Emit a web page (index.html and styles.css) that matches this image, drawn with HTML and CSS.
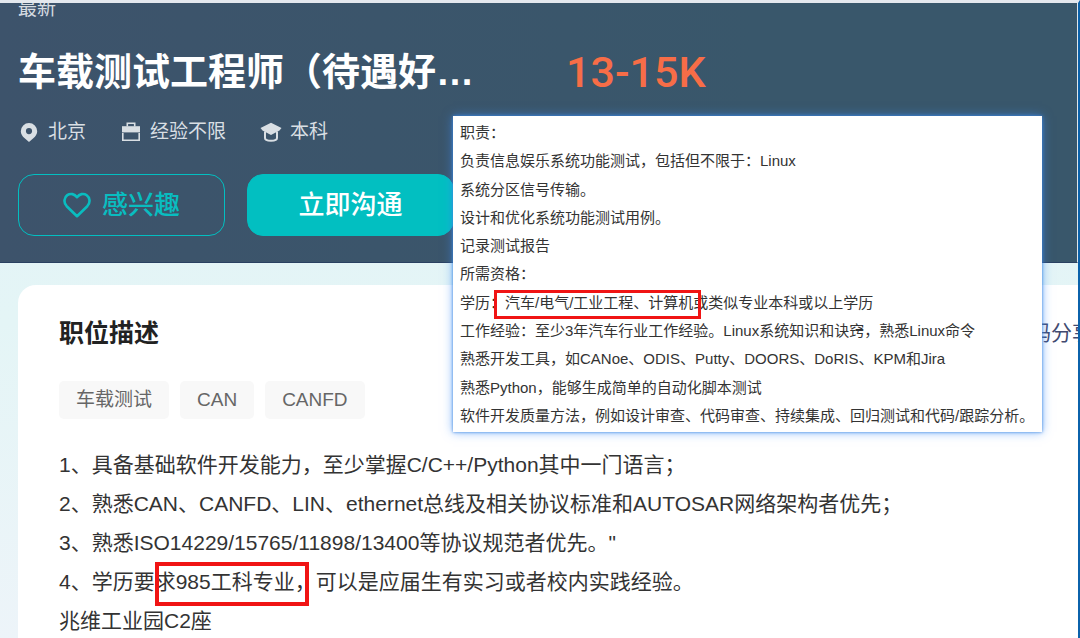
FILE: index.html
```html
<!DOCTYPE html>
<html lang="zh-CN">
<head>
<meta charset="utf-8">
<meta name="viewport" content="width=device-width, initial-scale=1">
<title>车载测试工程师</title>
<link rel="stylesheet" href="styles.css">
</head>
<body>
<div class="page">
  <header class="hero">
    <div class="hero-label">最新</div>
    <div class="hero-head">
      <h1 class="job-title">车载测试工程师（待遇好…</h1>
      <span class="salary">13-15K</span>
    </div>
    <ul class="meta">
      <li class="meta-item">
        <svg class="meta-icon" viewBox="0 0 20 20" aria-hidden="true"><path fill="currentColor" fill-rule="evenodd" d="M11 1a8.2 8.2 0 0 0-8.2 8.2c0 3 1.7 5 3.600 6.800L11 20l4.600-4c1.900-1.800 3.600-3.800 3.600-6.800A8.200 8.200 0 0 0 11 1zm0 5a3.100 3.100 0 1 1 0 6.200A3.100 3.100 0 0 1 11 6z"/></svg>
        <span>北京</span>
      </li>
      <li class="meta-item">
        <svg class="meta-icon" viewBox="0 0 20 20" aria-hidden="true"><path fill="none" stroke="currentColor" stroke-width="1.600" d="M7.300 4.500V1.300h7.400v3.200M2.800 11v7.200h16.400V11"/><path fill="currentColor" d="M2 4.200h18v6.200H2z"/></svg>
        <span>经验不限</span>
      </li>
      <li class="meta-item">
        <svg class="meta-icon" viewBox="0 0 20 20" aria-hidden="true"><path fill="currentColor" d="M11 .8 21.500 6 19.500 8.400 11 13 2.500 8.400.5 6z"/><path fill="none" stroke="currentColor" stroke-width="2" d="M5 9.500v6.500c0 3.700 12 3.700 12 0V9.500"/></svg>
        <span>本科</span>
      </li>
    </ul>
    <div class="actions">
      <button class="btn btn-outline" type="button">
        <svg class="heart" viewBox="0 0 28 26" aria-hidden="true"><path fill="none" stroke="currentColor" stroke-width="2.600" stroke-linejoin="round" d="M14 24.200 3.700 14.200C.2 10.500 1.200 5.300 4.300 3.200c3.100-2.200 7.300-1.300 9.700 2 2.400-3.300 6.600-4.200 9.700-2 3.100 2.100 4.100 7.300.6 11z"/></svg>
        <span>感兴趣</span>
      </button>
      <button class="btn btn-solid" type="button">立即沟通</button>
    </div>
  </header>

  <main class="card">
    <div class="card-head">
      <h2 class="card-title">职位描述</h2>
      <a class="share" href="#">码分享</a>
    </div>
    <ul class="tags">
      <li class="tag">车载测试</li>
      <li class="tag">CAN</li>
      <li class="tag">CANFD</li>
    </ul>
    <div class="description">
      <p>1、具备基础软件开发能力，至少掌握C/C++/Python其中一门语言；</p>
      <p>2、熟悉CAN、CANFD、LIN、ethernet总线及相关协议标准和AUTOSAR网络架构者优先；</p>
      <p>3、熟悉ISO14229/15765/11898/13400等协议规范者优先。"</p>
      <p>4、学历要<span class="mark mark-large">求985工科专业，</span>可以是应届生有实习或者校内实践经验。</p>
      <p>兆维工业园C2座</p>
    </div>
  </main>

  <aside class="popup">
    <p>职责：</p>
    <p>负责信息娱乐系统功能测试，包括但不限于：Linux</p>
    <p>系统分区信号传输。</p>
    <p>设计和优化系统功能测试用例。</p>
    <p>记录测试报告</p>
    <p>所需资格：</p>
    <p>学历：<span class="mark mark-small">汽车/电气/工业工程、计算机</span>或类似专业本科或以上学历</p>
    <p>工作经验：至少3年汽车行业工作经验。Linux系统知识和诀窍，熟悉Linux命令</p>
    <p>熟悉开发工具，如CANoe、ODIS、Putty、DOORS、DoRIS、KPM和Jira</p>
    <p>熟悉Python，能够生成简单的自动化脚本测试</p>
    <p>软件开发质量方法，例如设计审查、代码审查、持续集成、回归测试和代码/跟踪分析。</p>
  </aside>
</div>
</body>
</html>
```
FILE: styles.css
```css
* {
  box-sizing: border-box;
}

html {
  scrollbar-width: none;
}

body,
h1,
h2,
p,
ul {
  margin: 0;
  padding: 0;
}

ul {
  list-style: none;
}

body {
  font-family: "Liberation Sans", "Noto Sans CJK SC", sans-serif;
  color: #333;
}

.page {
  position: relative;
  display: flex;
  flex-direction: column;
  min-height: 100vh;
  overflow: hidden;
  border-top: 3px solid #e4e8ee;
  border-right: 2px solid #0b62ab;
  background: linear-gradient(#e3f3f8, #e4f5f6 50%, #edf4f9);
}

.hero {
  overflow: hidden;
  padding: 0 18px 26px;
  border-bottom: 1px solid #2a4161;
  border-right: 1px solid #dfe6ec;
  background: linear-gradient(90deg, #3d536b, #39576b 70%);
  color: #fff;
}

.hero-label {
  margin-top: -4px;
  font-size: 19px;
  line-height: 20px;
  color: #d5dbe1;
}

.hero-head {
  display: flex;
  align-items: center;
  gap: 92px;
  margin-top: 25px;
  white-space: nowrap;
}

.job-title {
  font-size: 38px;
  line-height: 56px;
  font-weight: 600;
}

.salary {
  font-family: Roboto, "Liberation Sans", sans-serif;
  font-size: 43px;
  line-height: 56px;
  font-weight: 500;
  color: #f76d47;
}

.meta {
  display: flex;
  gap: 34px;
  margin-top: 18px;
  font-size: 19px;
  line-height: 28px;
  color: #d9dfe4;
}

.meta-item {
  display: flex;
  align-items: center;
  gap: 10px;
}

.meta-icon {
  width: 20px;
  height: 20px;
  overflow: visible;
}

.actions {
  display: flex;
  gap: 22px;
  margin-top: 28px;
}

.btn {
  display: flex;
  align-items: center;
  justify-content: center;
  gap: 11px;
  width: 207px;
  height: 62px;
  border: 1px solid #02bfc1;
  border-radius: 16px;
  font-family: inherit;
  font-size: 26px;
  font-weight: 500;
  line-height: 38px;
}

.btn-outline {
  background: transparent;
  color: #09bdc0;
}

.btn-solid {
  background: #02bfc1;
  color: #fff;
}

.heart {
  width: 28px;
  height: 26px;
}

.card {
  flex: 1;
  margin: 22px 0 0 18px;
  padding: 30px 0 0 41px;
  border-radius: 18px 0 0 0;
  background: #fff;
}

.card-head {
  display: flex;
  justify-content: space-between;
  align-items: center;
}

.card-title {
  font-size: 25px;
  line-height: 36px;
  font-weight: 700;
  color: #222;
}

.share {
  margin-right: -15px;
  font-size: 21px;
  line-height: 30px;
  color: #414a70;
  text-decoration: none;
  white-space: nowrap;
}

.tags {
  display: flex;
  gap: 11px;
  margin-top: 30px;
}

.tag {
  padding: 0 17px;
  border-radius: 5px;
  background: #f8f8f8;
  font-size: 19px;
  line-height: 38px;
  color: #666;
}

.description {
  margin-top: 26px;
  font-size: 21px;
  line-height: 39px;
  white-space: nowrap;
}

.popup {
  position: absolute;
  top: 113px;
  left: 453px;
  right: 36px;
  display: flex;
  flex-direction: column;
  justify-content: space-between;
  height: 316px;
  padding: 3px 7px 2px;
  background: #fff;
  box-shadow: 0 0 3px #3c86e0, 0 0 10px rgba(60, 140, 250, 0.6);
  font-size: 15px;
  line-height: 28px;
  white-space: nowrap;
}

/* Red frames drawn over the key requirements */
.mark {
  position: relative;
}

.mark::after {
  content: "";
  position: absolute;
  border: 3px solid #f01414;
}

.mark-small::after {
  inset: -4px -8px -8px -11px;
}

.mark-large::after {
  inset: -8px 7px -13px 0;
  border-width: 4px;
}
```
